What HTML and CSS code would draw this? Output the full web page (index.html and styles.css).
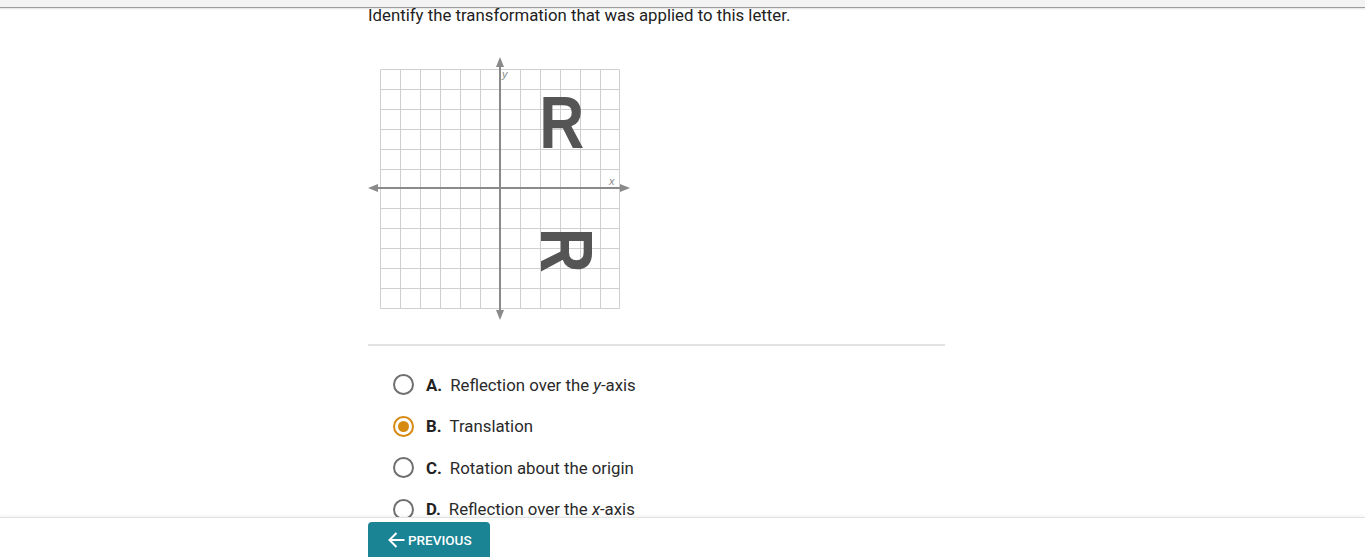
FILE: index.html
```html
<!DOCTYPE html>
<html lang="en">
<head>
<meta charset="utf-8">
<title>Transformation question</title>
<link rel="stylesheet" href="styles.css">
</head>
<body>
<div class="topbar"></div>
<main class="content">
  <p class="question">Identify the transformation that was applied to this letter.</p>
  <svg class="graph" width="262" height="263" viewBox="0 0 262 263" xmlns="http://www.w3.org/2000/svg">
    <g stroke="#cfcfcf" stroke-width="1" fill="none">
      <path d="M12.5 12.5H251.5V251.5H12.5Z"/>
      <path d="M32.5 12V252M52.5 12V252M72.5 12V252M92.5 12V252M112.5 12V252M152.5 12V252M172.5 12V252M192.5 12V252M212.5 12V252M232.5 12V252"/>
      <path d="M12 32.5H252M12 52.5H252M12 72.5H252M12 92.5H252M12 112.5H252M12 151.5H252M12 171.5H252M12 191.5H252M12 211.5H252M12 231.5H252"/>
    </g>
    <g stroke="#8a8a8a" stroke-width="2">
      <line x1="132" y1="6" x2="132" y2="257"/>
      <line x1="6" y1="131" x2="256" y2="131"/>
    </g>
    <g fill="#8a8a8a">
      <path d="M132 0L128 10H136Z"/>
      <path d="M132 263L128 253H136Z"/>
      <path d="M0 131L10 127V135Z"/>
      <path d="M262 131L252 127V135Z"/>
    </g>
    <text class="axis-label" x="134" y="21">y</text>
    <text class="axis-label" x="241" y="128">x</text>
    <g transform="translate(174 91) scale(0.83 1)">
      <text class="letter" x="-3.2" y="0">R</text>
    </g>
    <g transform="translate(198.5 194) rotate(90) scale(0.83 1)">
      <text class="letter" x="-28" y="25.5">R</text>
    </g>
  </svg>
  <div class="rule"></div>
  <ul class="options">
    <li class="option"><span class="radio"></span><b class="key">A.</b><span>Reflection over the <i>y</i>-axis</span></li>
    <li class="option"><span class="radio selected"></span><b class="key">B.</b><span>Translation</span></li>
    <li class="option"><span class="radio"></span><b class="key">C.</b><span>Rotation about the origin</span></li>
    <li class="option"><span class="radio"></span><b class="key">D.</b><span>Reflection over the <i>x</i>-axis</span></li>
  </ul>
</main>
<footer class="footer">
  <button class="prev-btn" type="button">
    <svg class="arrow" width="18" height="18" viewBox="0 0 18 18" xmlns="http://www.w3.org/2000/svg"><path d="M17.5 9H2.5M9.5 2L2.5 9L9.5 16" fill="none" stroke="#fff" stroke-width="2"/></svg>
    <span>Previous</span>
  </button>
</footer>
</body>
</html>
```

FILE: styles.css
```css
html, body {
  margin: 0;
  padding: 0;
  background: #fff;
  font-family: Roboto, "Liberation Sans", Arial, sans-serif;
  color: #222;
}

.topbar {
  position: fixed;
  top: 0;
  left: 0;
  right: 0;
  height: 7px;
  background: #f3f3f3;
  border-bottom: 1px solid #9c9c9c;
  box-shadow: 0 1px 2px rgba(0, 0, 0, 0.12);
  z-index: 5;
}

.content {
  padding: 5px 0 0 368px;
  width: 577px;
}

.question {
  margin: 0;
  font-size: 16.8px;
  line-height: 21px;
  color: #222;
}

.graph {
  display: block;
  margin-top: 31px;
}

.axis-label {
  font-family: "Liberation Sans", Arial, sans-serif;
  font-style: italic;
  font-size: 11px;
  fill: #8a8a8a;
}

.letter {
  font-family: "Liberation Sans", Arial, sans-serif;
  font-weight: 700;
  font-size: 75px;
  fill: #555;
}

.rule {
  margin-top: 24px;
  height: 2px;
  background: #e2e2e2;
}

.options {
  list-style: none;
  margin: 0;
  padding: 18px 0 0 0;
}

.option {
  display: flex;
  align-items: center;
  height: 41.5px;
  font-size: 16.8px;
  color: #2a2a2a;
}

.radio {
  box-sizing: border-box;
  width: 21px;
  height: 21px;
  margin-left: 25px;
  margin-right: 12px;
  border: 2px solid #6f6f6f;
  border-radius: 50%;
  display: flex;
  align-items: center;
  justify-content: center;
  flex-shrink: 0;
}

.radio.selected {
  border-color: #d68a12;
}

.radio.selected::after {
  content: "";
  width: 11px;
  height: 11px;
  border-radius: 50%;
  background: #d68a12;
}

.key {
  font-weight: 700;
  color: #222;
  margin-right: 8px;
}

.footer {
  position: fixed;
  left: 0;
  right: 0;
  bottom: 0;
  height: 39px;
  background: #fff;
  border-top: 1px solid #e2e2e2;
  box-shadow: 0 -1px 3px rgba(0, 0, 0, 0.06);
  padding-left: 368px;
  z-index: 5;
}

.prev-btn {
  margin-top: 4px;
  width: 122px;
  height: 40px;
  border: none;
  border-radius: 4px 4px 0 0;
  background: #1a8394;
  color: #fff;
  font-family: Roboto, "Liberation Sans", Arial, sans-serif;
  font-size: 13.5px;
  font-weight: 500;
  text-transform: uppercase;
  display: flex;
  align-items: flex-start;
  padding: 9px 0 0 19px;
  gap: 3px;
  cursor: pointer;
}

.prev-btn span {
  line-height: 18px;
}

.arrow {
  display: block;
}
```
